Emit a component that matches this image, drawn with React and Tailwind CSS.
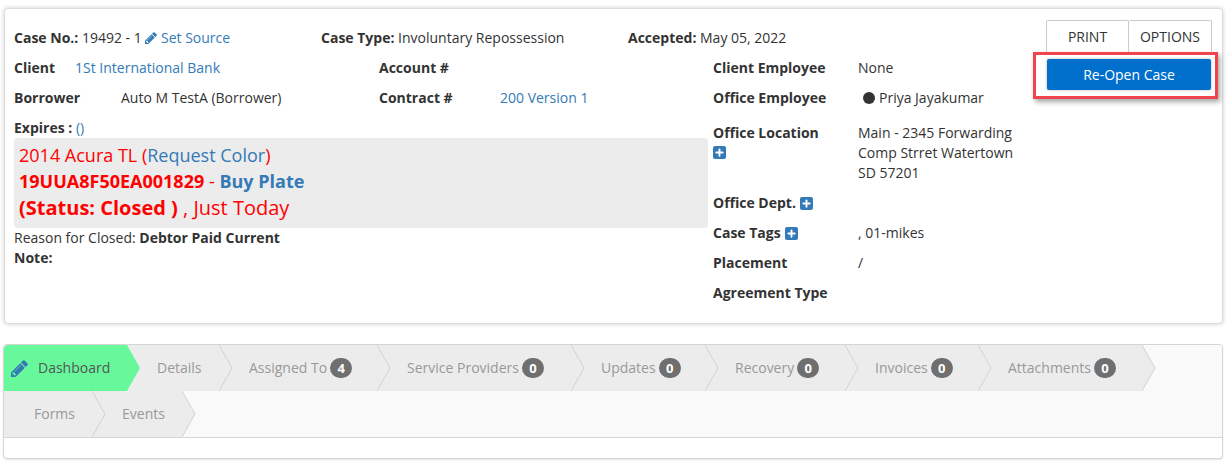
import { Plus } from 'lucide-react';

const PencilIcon = ({ className }) => (
  <svg viewBox="0 0 1536 1536" className={className} fill="currentColor">
    <path d="M363 1408l91-91-235-235-91 91v107h128v128h107zm523-928q0-22-22-22-10 0-17 7L305 1007q-7 7-7 17 0 22 22 22 10 0 17-7l542-542q7-7 7-17zm-54-192l416 416-832 832H0v-416zm683 96q0 53-37 90l-166 166-416-416 166-165q36-38 90-38 53 0 91 38l235 234q37 39 37 91z" />
  </svg>
);

const PlusSquare = () => (
  <span className="inline-flex items-center justify-center w-[13px] h-[13px] rounded-[2px] bg-[#337ab7] text-white">
    <Plus size={11} strokeWidth={4} />
  </span>
);

const tabsRowOne = [
  { label: 'Details', width: 'w-[92px]' },
  { label: 'Assigned To', count: 4, width: 'w-[158px]' },
  { label: 'Service Providers', count: 0, width: 'w-[194px]' },
  { label: 'Updates', count: 0, width: 'w-[134px]' },
  { label: 'Recovery', count: 0, width: 'w-[140px]' },
  { label: 'Invoices', count: 0, width: 'w-[133px]' },
  { label: 'Attachments', count: 0, width: 'w-[164px]' },
];

const tabsRowTwo = [
  { label: 'Forms', width: 'w-[88px]' },
  { label: 'Events', width: 'w-[90px]' },
];

const Tab = ({ label, count, width }) => (
  <div className={`relative h-[46px] flex items-center shrink-0 pl-[30px] bg-[#ececec] text-[#999] ${width}`}>
    <span>{label}</span>
    {count !== undefined && (
      <span className="ml-[3px] inline-flex items-center justify-center w-[22px] h-[20px] rounded-full bg-[#6f6f6f] text-white text-[13px] font-bold">
        {count}
      </span>
    )}
    <svg width="14" height="46" viewBox="0 0 14 46" className="absolute left-full top-0 z-10">
      <path d="M0 0 L13 23 L0 46 Z" fill="#ececec" />
      <path d="M0 0 L13 23 L0 46" fill="none" stroke="#d2d2d2" />
    </svg>
  </div>
);

const Field = ({ label, children, labelClass }) => (
  <div className="flex min-h-[30px] items-center">
    <b className={`font-bold shrink-0 ${labelClass}`}>{label}</b>
    <div>{children}</div>
  </div>
);

export default function App() {
  return (
    <div className="min-h-[469px] bg-white pt-2 pl-[3px] pr-[3px] text-sm text-[#333] font-['Open_Sans',sans-serif]">
      {/* case summary */}
      <div className="h-[316px] ml-px mb-[20px] bg-white border border-[#ddd] rounded shadow-[0_0_4px_rgba(0,0,0,0.2)] flex pt-[10px] pl-[9px]">
        <div className="w-[1027px] shrink-0">
          <div className="flex h-[34px] items-center pt-[4px]">
            <div className="w-[307px]">
              <b>Case No.:</b> 19492 - 1{' '}
              <PencilIcon className="inline w-3 h-3 -mt-[3px] text-[#337ab7]" />{' '}
              <span className="text-[#337ab7]">Set Source</span>
            </div>
            <div className="w-[307px]">
              <b>Case Type:</b> Involuntary Repossession
            </div>
            <div>
              <b>Accepted:</b> May 05, 2022
            </div>
          </div>

          <div className="flex">
            <div className="w-[699px] shrink-0">
              <div className="flex">
                <div className="w-[365px]">
                  <Field label="Client" labelClass="w-[61px]">
                    <span className="text-[#337ab7]">1St International Bank</span>
                  </Field>
                  <Field label="Borrower" labelClass="w-[107px]">Auto M TestA (Borrower)</Field>
                </div>
                <div>
                  <Field label="Account #" labelClass="w-[121px]" />
                  <Field label="Contract #" labelClass="w-[121px]">
                    <span className="text-[#337ab7]">200 Version 1</span>
                  </Field>
                </div>
              </div>

              <div className="h-[25px] flex items-center pt-[5px]">
                <b>Expires :</b>&nbsp;<span className="text-[#337ab7]">()</span>
              </div>

              <div className="w-[694px] h-[90px] bg-[#ececec] rounded-[4px] px-[5px] text-[18px] leading-[26px] text-[#f00] pt-[4px]">
                <div>
                  2014 Acura TL (<span className="text-[#337ab7]">Request Color</span>)
                </div>
                <div>
                  <b>19UUA8F50EA001829</b> - <b className="text-[#337ab7]">Buy Plate</b>
                </div>
                <div className="text-[20px] leading-[28px]">
                  <b>(Status: Closed )</b> , Just Today
                </div>
              </div>

              <div className="leading-5">
                Reason for Closed: <b>Debtor Paid Current</b>
              </div>
              <div className="leading-5">
                <b>Note:</b>
              </div>
            </div>

            <div className="flex-1">
              <Field label="Client Employee" labelClass="w-[145px]">None</Field>
              <Field label="Office Employee" labelClass="w-[145px]">
                <span className="inline-flex items-center gap-1 pl-[5px]">
                  <span className="w-3 h-3 rounded-full bg-[#333]" />
                  Priya Jayakumar
                </span>
              </Field>
              <div className="flex pt-[10px] mb-[5px] leading-5">
                <div className="w-[145px] shrink-0">
                  <b className="block">Office Location</b>
                  <PlusSquare />
                </div>
                <div>
                  Main - 2345 Forwarding
                  <br />
                  Comp Strret Watertown
                  <br />
                  SD 57201
                </div>
              </div>
              <div className="h-[30px] flex items-center gap-1">
                <b>Office Dept.</b> <PlusSquare />
              </div>
              <div className="flex h-[30px] items-center">
                <div className="w-[145px] flex items-center gap-1">
                  <b>Case Tags</b> <PlusSquare />
                </div>
                <div>, 01-mikes</div>
              </div>
              <Field label="Placement" labelClass="w-[145px]">/</Field>
              <Field label="Agreement Type" labelClass="w-[145px]" />
            </div>
          </div>
        </div>

        <div className="w-[185px] -ml-[8px] mt-px shrink-0">
          <div className="flex pl-[13px]">
            <div className="w-[83px] h-[32px] flex items-center justify-center border border-b-0 border-[#ccc] rounded-t-[2px] text-[#333]">PRINT</div>
            <div className="w-[83px] h-[32px] flex items-center justify-center border border-b-0 border-l-0 border-[#ccc] rounded-t-[2px] text-[#333]">OPTIONS</div>
          </div>
          <div className="h-[47px] border-[3px] border-[#f0434b] shadow-[2px_3px_5px_rgba(0,0,0,0.35)] pt-[4px] pl-[11px]">
            <button className="w-[164px] h-[31px] bg-[#0070cc] text-white rounded-[2px] shadow-[0_0_3px_rgba(0,0,0,0.3)]">
              Re-Open Case
            </button>
          </div>
        </div>
      </div>

      {/* tabs */}
      <div className="h-[115px] bg-white border border-[#d5d5d5] rounded shadow-[0_1px_2px_rgba(0,0,0,0.1)] overflow-hidden">
        <div className="bg-[#f9f9f9] border-b border-[#d5d5d5]">
          <div className="flex h-[46px]">
            <div className="relative h-[46px] w-[123px] shrink-0 bg-[#66f89b] flex items-center pl-[7px] gap-[10px] text-[#555] rounded-tl">
              <PencilIcon className="w-[17px] h-[17px] text-[#337ab7]" />
              <span>Dashboard</span>
              <svg width="14" height="46" viewBox="0 0 14 46" className="absolute left-full top-0 z-20">
                <path d="M0 0 L13 23 L0 46 Z" fill="#66f89b" />
              </svg>
            </div>
            {tabsRowOne.map((t) => (
              <Tab key={t.label} {...t} />
            ))}
          </div>
          <div className="flex h-[46px]">
            {tabsRowTwo.map((t) => (
              <Tab key={t.label} {...t} />
            ))}
          </div>
        </div>
      </div>
    </div>
  );
}
